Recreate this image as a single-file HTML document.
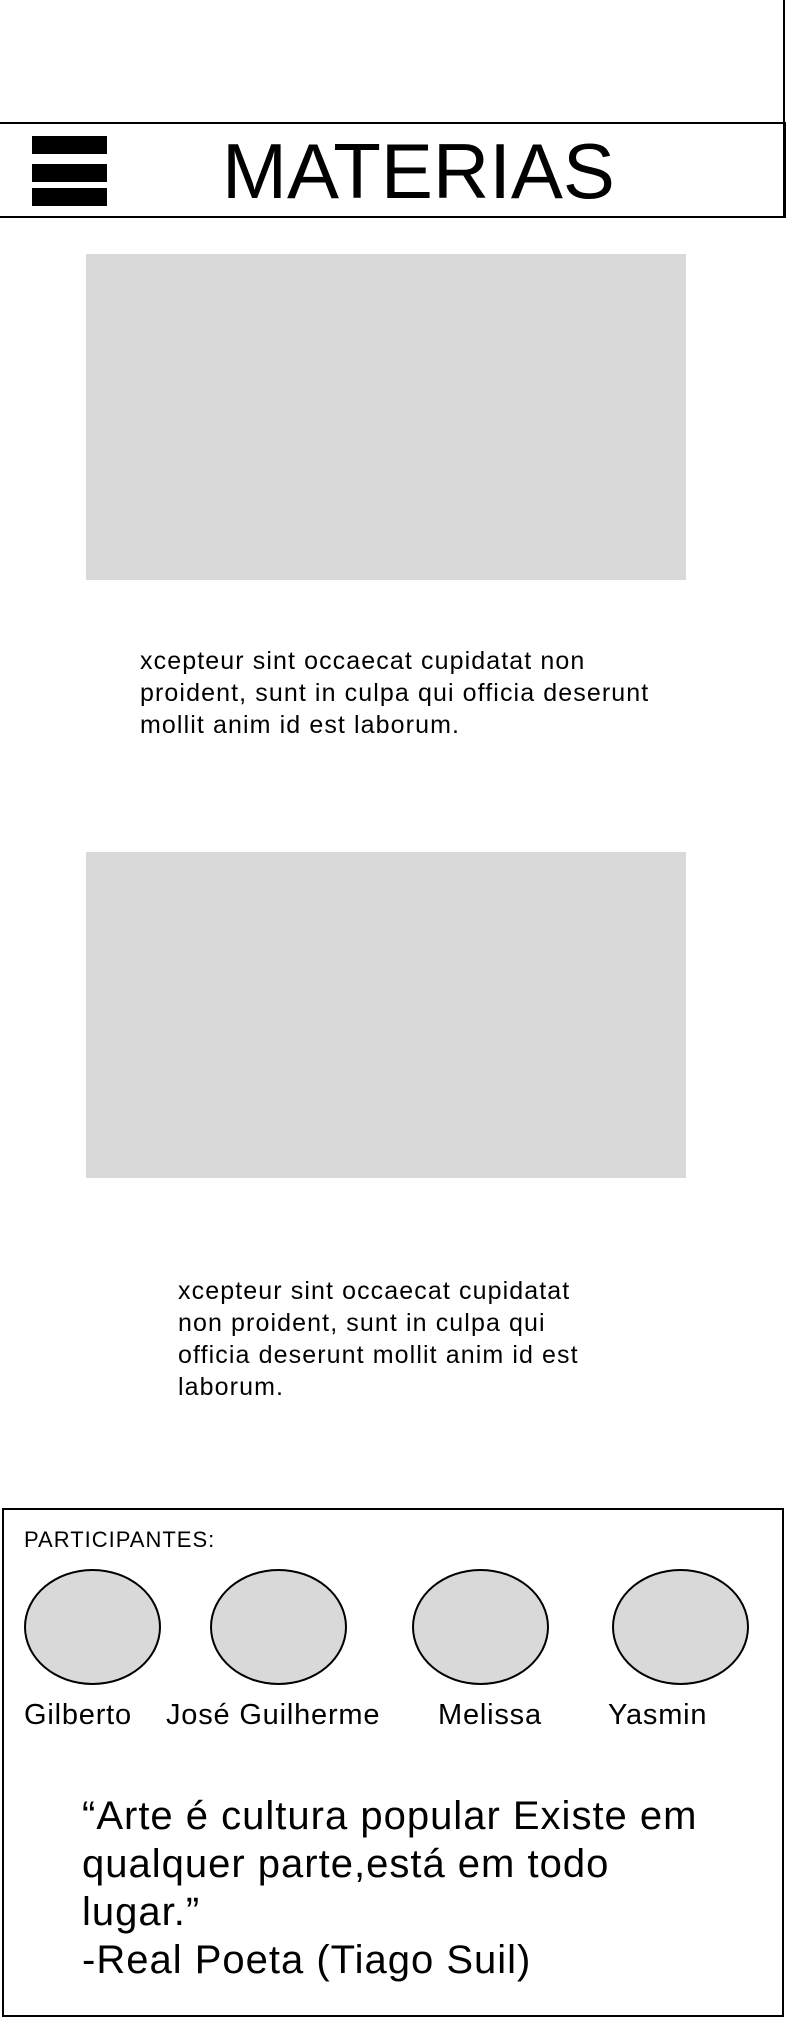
<!DOCTYPE html>
<html><head><meta charset="utf-8"><style>
html,body{margin:0;padding:0;background:#fff;}
body{width:786px;height:2020px;position:relative;overflow:hidden;font-family:"Liberation Sans",sans-serif;color:#000;}
.a{position:absolute;}
.bar{position:absolute;left:32px;width:75px;height:18px;background:#000;}
.img{position:absolute;left:86px;width:600px;background:#d9d9d9;}
.t{position:absolute;font-size:25px;letter-spacing:1.1px;line-height:32px;white-space:nowrap;}
.c{position:absolute;top:1569px;width:137px;height:116px;border:2px solid #000;border-radius:50%;background:#d9d9d9;box-sizing:border-box;}
.n{position:absolute;top:1699px;font-size:29px;letter-spacing:0.8px;line-height:32px;white-space:nowrap;}
</style></head><body>
<div class="a" style="right:1px;top:0;width:2px;height:218px;background:#000"></div>
<div class="a" style="left:0;top:122px;width:786px;height:96px;border-top:2px solid #000;border-bottom:2px solid #000;border-right:2px solid #000;box-sizing:border-box"></div>
<div class="bar" style="top:136px"></div>
<div class="bar" style="top:164px"></div>
<div class="bar" style="top:188px"></div>
<div class="a" style="left:222px;top:126px;font-size:78px;line-height:90px;white-space:nowrap">MATERIAS</div>
<div class="img" style="top:254px;height:326px"></div>
<div class="t" style="left:140px;top:645px">xcepteur sint occaecat cupidatat non<br>proident, sunt in culpa qui officia deserunt<br>mollit anim id est laborum.</div>
<div class="img" style="top:852px;height:326px"></div>
<div class="t" style="left:178px;top:1275px">xcepteur sint occaecat cupidatat<br>non proident, sunt in culpa qui<br>officia deserunt mollit anim id est<br>laborum.</div>
<div class="a" style="left:2px;top:1508px;width:782px;height:509px;border:2px solid #000;box-sizing:border-box"></div>
<div class="a" style="left:24px;top:1528px;font-size:22px;letter-spacing:1px;line-height:24px">PARTICIPANTES:</div>
<div class="c" style="left:24px"></div>
<div class="c" style="left:210px"></div>
<div class="c" style="left:412px"></div>
<div class="c" style="left:612px"></div>
<div class="n" style="left:24px">Gilberto</div>
<div class="n" style="left:166px">José Guilherme</div>
<div class="n" style="left:438px">Melissa</div>
<div class="n" style="left:608px">Yasmin</div>
<div class="a" style="left:82px;top:1792px;font-size:40px;letter-spacing:1px;line-height:48px;white-space:nowrap">“Arte é cultura popular Existe em<br>qualquer parte,está em todo<br>lugar.”<br>-Real Poeta (Tiago Suil)</div>
</body></html>
